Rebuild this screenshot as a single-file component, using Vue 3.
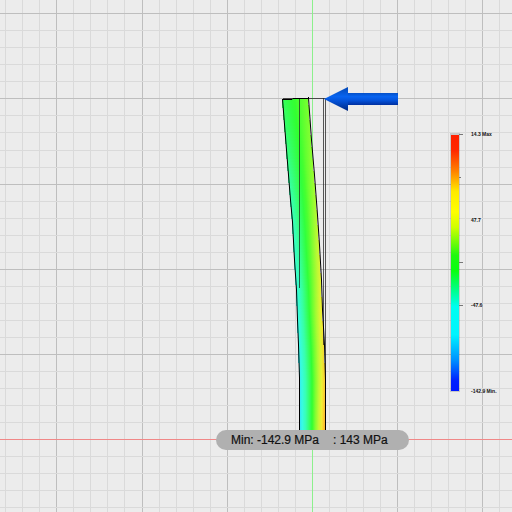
<script setup>
const SIZE = 512
const STEP = 17.04

// Grid lines are counted outwards from the origin where the axes cross.
function gridLines(origin) {
  const lines = []
  for (let k = -30; k <= 30; k++) {
    const at = Math.floor(origin + k * STEP)
    if (k !== 0 && at >= 0 && at < SIZE) lines.push({ at, major: k % 5 === 0 })
  }
  return lines.sort((a, b) => a.major - b.major)
}
const columns = gridLines(312.4)
const rows = gridLines(439.7)

function interpolate(table, at) {
  if (at <= table[0][0]) return table[0].slice(1)
  for (let i = 1; i < table.length; i++) {
    if (at <= table[i][0]) {
      const a = table[i - 1]
      const b = table[i]
      const t = (at - a[0]) / (b[0] - a[0])
      return a.slice(1).map((v, n) => v + (b[n + 1] - v) * t)
    }
  }
  return table[table.length - 1].slice(1)
}

// Stress from compression (-1) to tension (1), as red, green, blue.
const palette = [
  [-1, 48, 216, 255],
  [-0.8, 56, 250, 240],
  [-0.45, 56, 255, 176],
  [-0.15, 52, 255, 90],
  [0, 48, 255, 48],
  [0.15, 104, 255, 48],
  [0.4, 176, 250, 52],
  [0.7, 244, 240, 52],
  [1, 255, 172, 48],
]

const leftEdge = [[99, 282], [150, 286], [200, 290], [222, 292], [260, 294], [290, 296], [320, 297], [345, 298], [378, 299], [432, 299]]
const rightEdge = [[98, 308], [140, 311], [175, 314], [215, 317], [245, 319], [280, 321], [310, 322], [345, 324], [380, 325], [432, 325]]
const stress = [[98, -0.16, 0.2], [150, -0.32, 0.28], [200, -0.5, 0.4], [260, -0.66, 0.58], [320, -0.8, 0.75], [432, -1, 1]]

const strips = []
for (let y = 99; y < 432; y += 3) {
  const [x1] = interpolate(leftEdge, y)
  const [x2] = interpolate(rightEdge, y)
  const [low, high] = interpolate(stress, y)
  const stops = []
  for (let i = 0; i <= 8; i++) {
    const rgb = interpolate(palette, low + ((high - low) * i) / 8).map(Math.round)
    stops.push({ offset: i / 8, color: `rgb(${rgb.join(',')})` })
  }
  strips.push({ id: `strip-${y}`, y, x: x1, width: x2 - x1, stops })
}
// Strokes run through pixel centres so that they stay one pixel wide.
const toPoints = (edge) => edge.map(([y, x]) => `${x + 0.5},${y}`).join(' ')

const ticks = [
  { y: 134, length: 4 },
  { y: 177, length: 2 },
  { y: 262, length: 4 },
  { y: 305, length: 4 },
]
const labels = [
  { y: 136, text: '14.3 Max' },
  { y: 222, text: '47.7' },
  { y: 307, text: '-47.6' },
  { y: 393, text: '-142.9 Min.' },
]
</script>

<template>
  <main class="viewport">
    <svg class="scene" viewBox="0 0 512 512" role="img" aria-label="Beam stress plot">
      <defs>
        <linearGradient v-for="s in strips" :id="s.id" :key="s.id">
          <stop v-for="p in s.stops" :key="p.offset" :offset="p.offset" :stop-color="p.color" />
        </linearGradient>
        <linearGradient id="scale" x1="0" y1="0" x2="0" y2="1">
          <stop offset="0" stop-color="#ff2000" />
          <stop offset="0.06" stop-color="#ff2800" />
          <stop offset="0.14" stop-color="#ff8000" />
          <stop offset="0.22" stop-color="#ffea00" />
          <stop offset="0.3" stop-color="#ffff00" />
          <stop offset="0.36" stop-color="#d0ff00" />
          <stop offset="0.47" stop-color="#20f810" />
          <stop offset="0.53" stop-color="#08ff10" />
          <stop offset="0.61" stop-color="#00ff90" />
          <stop offset="0.67" stop-color="#00fff0" />
          <stop offset="0.78" stop-color="#00f4ff" />
          <stop offset="0.88" stop-color="#0090ff" />
          <stop offset="0.96" stop-color="#0020ff" />
          <stop offset="1" stop-color="#0018ff" />
        </linearGradient>
        <linearGradient id="shaft" x1="0" y1="0" x2="0" y2="1">
          <stop offset="0" stop-color="#0450c8" />
          <stop offset="0.3" stop-color="#0864f0" />
          <stop offset="0.6" stop-color="#0454dc" />
          <stop offset="1" stop-color="#0030a0" />
        </linearGradient>
        <linearGradient id="head" x1="0" y1="0" x2="0" y2="1">
          <stop offset="0" stop-color="#0448b4" />
          <stop offset="0.4" stop-color="#0864f0" />
          <stop offset="0.6" stop-color="#0450d4" />
          <stop offset="1" stop-color="#002880" />
        </linearGradient>
      </defs>

      <rect class="ground" width="512" height="512" />
      <g class="crisp">
        <rect v-for="c in columns" :key="c.at" :class="c.major ? 'major' : 'minor'" :x="c.at" y="0" width="1" height="512" />
        <rect v-for="r in rows" :key="r.at" :class="r.major ? 'major' : 'minor'" x="0" :y="r.at" width="512" height="1" />
        <rect class="axis-x" x="0" y="439" width="512" height="1" />
        <rect class="axis-y" x="312" y="0" width="1" height="512" />
      </g>

      <g class="crisp">
        <rect v-for="s in strips" :key="s.id" :x="s.x" :y="s.y" :width="s.width" height="3" :fill="`url(#${s.id})`" />
        <rect class="rest" x="299" y="98" width="1" height="190" />
        <rect class="rest" x="283" y="98" width="42" height="1" />
        <rect class="rest" x="323" y="98" width="1" height="247" />
        <rect class="rest" x="325" y="98" width="1" height="334" />
      </g>
      <polyline class="edge" :points="toPoints(leftEdge)" />
      <polyline class="edge" :points="toPoints(rightEdge)" />
      <path class="edge" d="M282 99.5 H292 L293 98.5 H308.5 V97" />

      <rect x="347" y="93" width="51" height="12" fill="url(#shaft)" />
      <path d="M324 99 L348 87 V111 Z" fill="url(#head)" />

      <rect class="scale-shadow" x="450" y="133" width="10" height="259" />
      <rect x="451" y="135" width="8" height="256" fill="url(#scale)" />
      <rect v-for="t in ticks" :key="t.y" class="tick" x="459" :y="t.y" :width="t.length" height="1" />
      <text v-for="l in labels" :key="l.text" class="scale-label" x="471" :y="l.y">{{ l.text }}</text>

      <rect class="pill" x="216" y="430" width="193" height="20" rx="10" />
      <text class="pill-label" x="231" y="444">Min: -142.9 MPa</text>
      <text class="pill-label" x="333" y="444">: 143 MPa</text>
    </svg>
  </main>
</template>

<style>
body {
  background: #ececec;
}
</style>

<style scoped>
.viewport {
  font-family: "Liberation Sans", Arial, sans-serif;
}
.scene {
  display: block;
  width: 100%;
}
.ground {
  fill: #ececec;
}
.crisp {
  shape-rendering: crispEdges;
}
.minor {
  fill: #dadada;
}
.major {
  fill: #bebebe;
}
.axis-x {
  fill: #f08888;
}
.axis-y {
  fill: #8cf08c;
}
.rest {
  fill: #222;
  fill-opacity: 0.75;
}
.edge {
  fill: none;
  stroke: #000;
  stroke-width: 1;
}
.scale-shadow {
  fill: #000;
  fill-opacity: 0.15;
}
.tick {
  fill: #777;
}
.scale-label {
  font-size: 5px;
  font-weight: bold;
  fill: #111;
}
.pill {
  fill: #b0b0b0;
}
.pill-label {
  font-size: 12px;
  fill: #111;
  stroke: #111;
  stroke-width: 0.2;
}
</style>
